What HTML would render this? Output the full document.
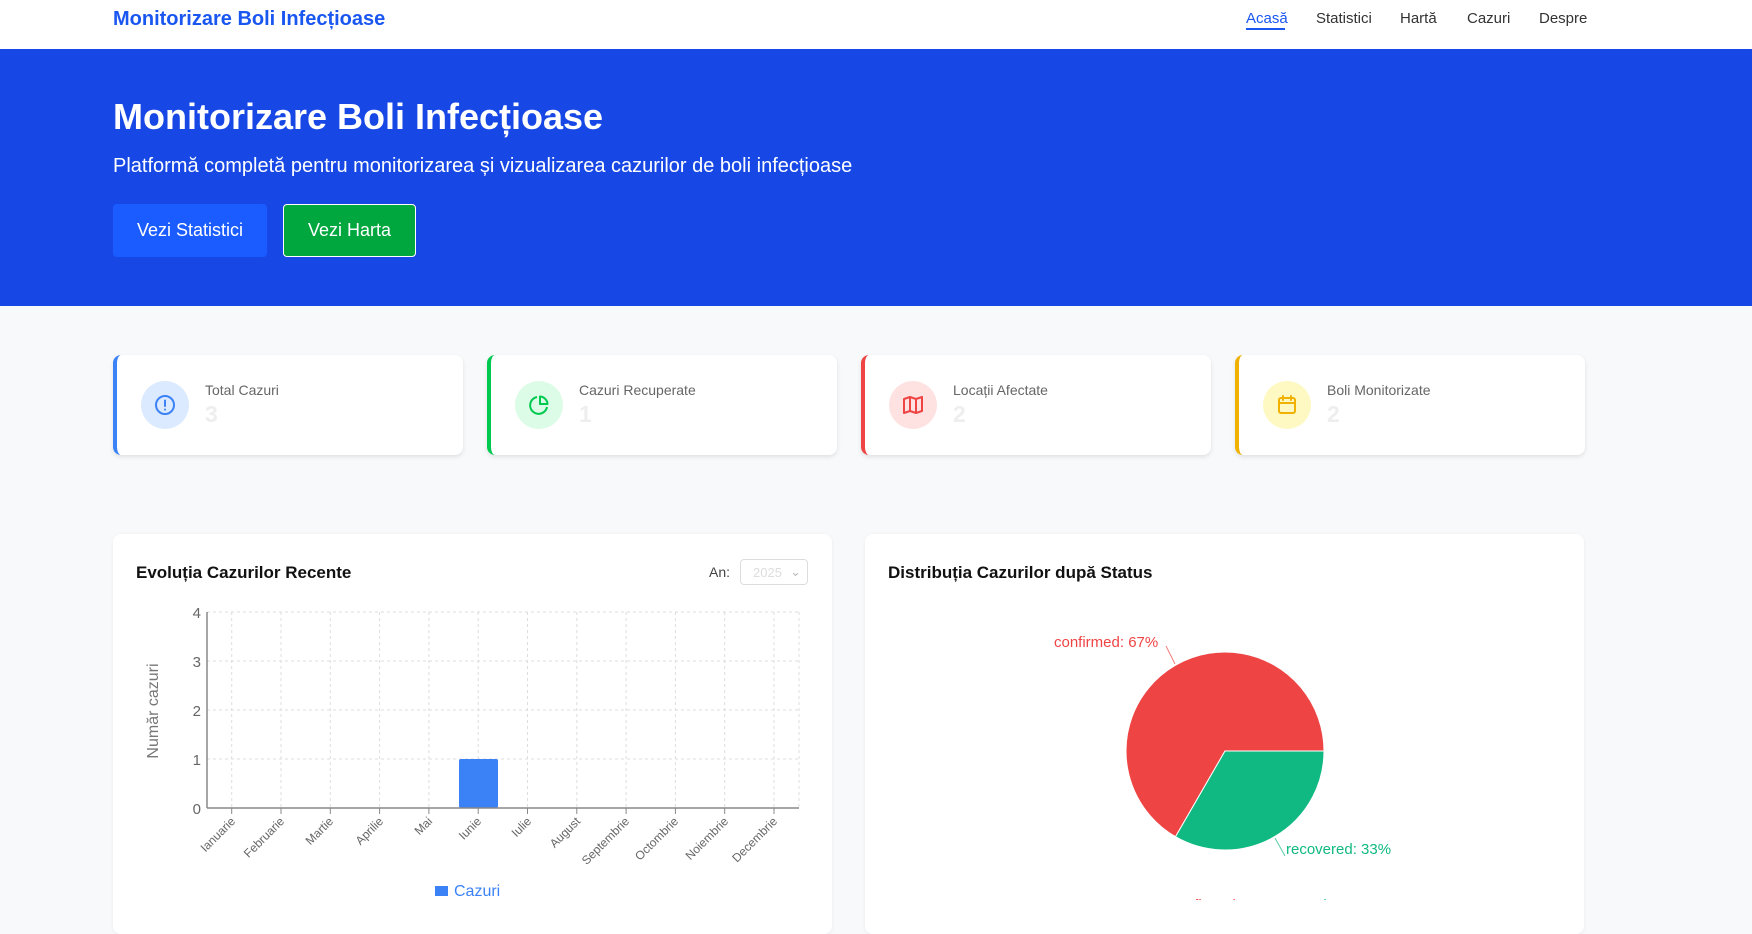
<!DOCTYPE html>
<html><head><meta charset="utf-8"><style>
*{margin:0;padding:0;box-sizing:border-box}
body{width:1752px;height:900px;overflow:hidden;background:#f8f9fb;font-family:"Liberation Sans",sans-serif;position:relative}
.abs{position:absolute}
nav{position:absolute;left:0;top:0;width:1752px;height:49px;background:#fff}
.brand{left:113px;top:8px;font-size:20px;font-weight:bold;color:#1a56f0}
.nl{top:10px;font-size:15px;color:#333}
.hero{left:0;top:49px;width:1752px;height:257px;background:#1748e5}
h1{position:absolute;left:113px;top:96px;font-size:36px;color:#fff;font-weight:bold}
.sub{left:113px;top:155px;font-size:20px;color:#fff}
.btn{top:204px;height:53px;color:#fff;font-size:18px;display:flex;align-items:center;justify-content:center;border-radius:4px}
.card{top:355px;width:350px;height:100px;background:#fff;border-radius:8px;box-shadow:0 2px 5px rgba(0,0,0,.1)}
.card .ic{position:absolute;left:24px;top:26px;width:48px;height:48px;border-radius:50%;display:flex;align-items:center;justify-content:center}
.card .lb{position:absolute;left:88px;top:27px;font-size:14px;color:#666}
.card .nm{position:absolute;left:88px;top:46px;font-size:23px;font-weight:bold;color:#eee}
.panel{top:534px;height:400px;background:#fff;border-radius:8px;box-shadow:0 1px 4px rgba(0,0,0,.06)}
.pt{font-size:17px;font-weight:bold;color:#111}
</style></head><body>
<nav>
<div class="abs brand">Monitorizare Boli Infecțioase</div>
<div class="abs nl" style="left:1246px;color:#1a56f0">Acasă</div>
<div class="abs" style="left:1246px;top:28px;width:39px;height:2px;background:#1a56f0"></div>
<div class="abs nl" style="left:1316px">Statistici</div>
<div class="abs nl" style="left:1400px">Hartă</div>
<div class="abs nl" style="left:1467px">Cazuri</div>
<div class="abs nl" style="left:1539px">Despre</div>
</nav>
<div class="abs hero"></div>
<h1>Monitorizare Boli Infecțioase</h1>
<div class="abs sub">Platformă completă pentru monitorizarea și vizualizarea cazurilor de boli infecțioase</div>
<div class="abs btn" style="left:113px;width:154px;background:#1a5cff">Vezi Statistici</div>
<div class="abs btn" style="left:283px;width:133px;background:#00a63e;border:1px solid #fff">Vezi Harta</div>

<div class="abs card" style="left:113px;border-left:4px solid #3b82f6"><div class="ic" style="background:#dbeafe"><svg width="24" height="24" viewBox="0 0 24 24" fill="none" stroke="#3b82f6" stroke-width="2" stroke-linecap="round"><circle cx="12" cy="12" r="9"/><path d="M12 7.5v5.5M12 16.5v.1"/></svg></div><div class="lb">Total Cazuri</div><div class="nm">3</div></div>
<div class="abs card" style="left:487px;border-left:4px solid #00c950"><div class="ic" style="background:#dcfce7"><svg width="24" height="24" viewBox="0 0 24 24" fill="none" stroke="#00c950" stroke-width="2" stroke-linejoin="round"><path d="M20 14A8.5 8.5 0 1 1 10 4"/><path d="M13 3.5A8 8 0 0 1 20.5 11H13z"/></svg></div><div class="lb">Cazuri Recuperate</div><div class="nm">1</div></div>
<div class="abs card" style="left:861px;border-left:4px solid #ef4444"><div class="ic" style="background:#fee2e2"><svg width="24" height="24" viewBox="0 0 24 24" fill="none" stroke="#ef4444" stroke-width="2" stroke-linejoin="round"><path d="M3 6l6-2 6 2 6-2v14l-6 2-6-2-6 2z M9 4v14 M15 6v14"/></svg></div><div class="lb">Locații Afectate</div><div class="nm">2</div></div>
<div class="abs card" style="left:1235px;border-left:4px solid #f0b100"><div class="ic" style="background:#fef9c3"><svg width="24" height="24" viewBox="0 0 24 24" fill="none" stroke="#f0b100" stroke-width="2" stroke-linecap="round"><rect x="4" y="5" width="16" height="15" rx="2"/><path d="M4 10h16M8 3v4M16 3v4"/></svg></div><div class="lb">Boli Monitorizate</div><div class="nm">2</div></div>

<div class="abs panel" style="left:113px;width:719px"></div>
<div class="abs panel" style="left:865px;width:719px"></div>
<div class="abs pt" style="left:136px;top:563px">Evoluția Cazurilor Recente</div>
<div class="abs" style="left:709px;top:564px;font-size:14px;color:#444">An:</div>
<div class="abs" style="left:740px;top:559px;width:68px;height:26px;border:1px solid #ddd;border-radius:4px;font-size:13px;color:#ddd;padding:5px 0 0 12px">2025 <span style="position:absolute;right:6px;top:4px;color:#bbb">⌄</span></div>
<div class="abs pt" style="left:888px;top:563px">Distribuția Cazurilor după Status</div>

<svg class="abs" style="left:0;top:0" width="1752" height="900" font-family="Liberation Sans, sans-serif">
<g stroke="#ddd" stroke-dasharray="3,3" stroke-width="1">
<line x1="207" y1="612" x2="799" y2="612"/><line x1="207" y1="661" x2="799" y2="661"/><line x1="207" y1="710" x2="799" y2="710"/><line x1="207" y1="759" x2="799" y2="759"/>
<line x1="231.7" y1="612" x2="231.7" y2="808"/><line x1="281" y1="612" x2="281" y2="808"/><line x1="330.3" y1="612" x2="330.3" y2="808"/><line x1="379.6" y1="612" x2="379.6" y2="808"/><line x1="428.9" y1="612" x2="428.9" y2="808"/><line x1="478.2" y1="612" x2="478.2" y2="808"/><line x1="527.5" y1="612" x2="527.5" y2="808"/><line x1="576.8" y1="612" x2="576.8" y2="808"/><line x1="626.1" y1="612" x2="626.1" y2="808"/><line x1="675.4" y1="612" x2="675.4" y2="808"/><line x1="724.7" y1="612" x2="724.7" y2="808"/><line x1="774" y1="612" x2="774" y2="808"/><line x1="799" y1="612" x2="799" y2="808"/>
</g>
<rect x="459" y="759" width="39" height="49" rx="2" fill="#3b82f6"/>
<g stroke="#888" stroke-width="1.5"><line x1="207" y1="612" x2="207" y2="808"/><line x1="207" y1="808" x2="799" y2="808"/></g>
<g stroke="#888"><line x1="231.7" y1="808" x2="231.7" y2="814"/><line x1="281" y1="808" x2="281" y2="814"/><line x1="330.3" y1="808" x2="330.3" y2="814"/><line x1="379.6" y1="808" x2="379.6" y2="814"/><line x1="428.9" y1="808" x2="428.9" y2="814"/><line x1="478.2" y1="808" x2="478.2" y2="814"/><line x1="527.5" y1="808" x2="527.5" y2="814"/><line x1="576.8" y1="808" x2="576.8" y2="814"/><line x1="626.1" y1="808" x2="626.1" y2="814"/><line x1="675.4" y1="808" x2="675.4" y2="814"/><line x1="724.7" y1="808" x2="724.7" y2="814"/><line x1="774" y1="808" x2="774" y2="814"/></g>
<g font-size="15" fill="#666" text-anchor="end"><text x="201" y="618">4</text><text x="201" y="667">3</text><text x="201" y="716">2</text><text x="201" y="765">1</text><text x="201" y="814">0</text></g>
<text transform="translate(158,711) rotate(-90)" font-size="16" fill="#777" text-anchor="middle">Număr cazuri</text>
<g font-size="12" fill="#666" text-anchor="end">
<text transform="translate(236,822) rotate(-45)">Ianuarie</text><text transform="translate(285,822) rotate(-45)">Februarie</text><text transform="translate(334,822) rotate(-45)">Martie</text><text transform="translate(384,822) rotate(-45)">Aprilie</text><text transform="translate(433,822) rotate(-45)">Mai</text><text transform="translate(482,822) rotate(-45)">Iunie</text><text transform="translate(532,822) rotate(-45)">Iulie</text><text transform="translate(581,822) rotate(-45)">August</text><text transform="translate(630,822) rotate(-45)">Septembrie</text><text transform="translate(679,822) rotate(-45)">Octombrie</text><text transform="translate(729,822) rotate(-45)">Noiembrie</text><text transform="translate(778,822) rotate(-45)">Decembrie</text>
</g>
<rect x="435" y="886" width="13" height="10" fill="#3b82f6"/>
<text x="454" y="896" font-size="16" fill="#3b82f6">Cazuri</text>
<path d="M1225 751 L1324 751 A99 99 0 1 0 1175.5 836.7 Z" fill="#ef4444" stroke="#fff" stroke-width="1"/>
<path d="M1225 751 L1175.5 836.7 A99 99 0 0 0 1324 751 Z" fill="#10b981" stroke="#fff" stroke-width="1"/>
<line x1="1175" y1="664" x2="1166" y2="646" stroke="#ef4444" opacity=".7"/>
<line x1="1275" y1="838" x2="1285" y2="856" stroke="#10b981" opacity=".7"/>
<text x="1054" y="647" font-size="15" fill="#ef4444">confirmed: 67%</text>
<text x="1286" y="854" font-size="15" fill="#10b981">recovered: 33%</text>
<text x="1170" y="910" font-size="15" fill="#ef4444">confirmed</text>
<text x="1260" y="910" font-size="15" fill="#10b981">recovered</text>
</svg>
</body></html>
